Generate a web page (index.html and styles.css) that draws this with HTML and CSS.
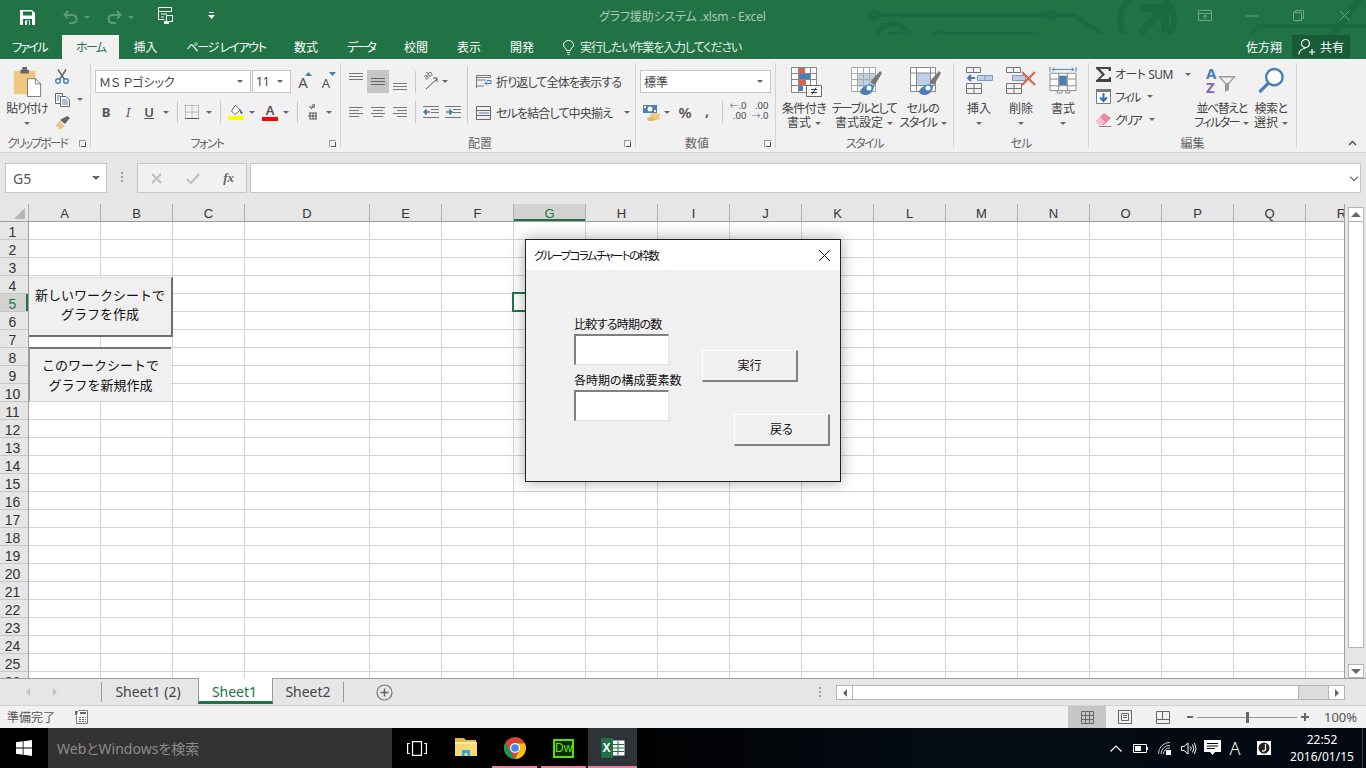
FILE: index.html
```html
<!DOCTYPE html>
<html lang="ja">
<head>
<meta charset="utf-8">
<title>グラフ援助システム .xlsm - Excel</title>
<link rel="stylesheet" href="styles.css">
</head>
<body>
<div class="app">

<header class="titlebar">
  <svg class="pattern" viewBox="0 0 506 53" width="506" height="53">
    <g fill="none" stroke="#1c6a41" stroke-width="4">
      <path d="M14 15H214L270 53"/><circle cx="14" cy="15" r="3.5"/><circle cx="191" cy="15" r="3.5"/>
      <path d="M79 34H177L205 53"/><circle cx="79" cy="34" r="3.5"/>
      <path d="M117 53L130 45H230L243 53"/><circle cx="220" cy="45" r="3.5"/>
      <circle cx="287" cy="20" r="27" stroke-width="6"/>
      <circle cx="33" cy="41" r="17" stroke-width="5"/>
      <path d="M376 53L398 26H506M455 53L498 0M470 40L506 -6"/>
    </g>
    <path fill="#1c6a41" d="M278 30L295 12H281V4H309V32H301V18L284 35z"/>
    <path fill="#1c6a41" d="M45 52L33 40V48H27V32H43V38H36L49 49z"/>
  </svg>
  <div class="qat">
    <span class="qat-save"><svg viewBox="0 0 15 15" width="15" height="15"><path fill="#fff" fill-rule="evenodd" d="M0 0H12L15 3V15H0ZM3 1.5V5.5H12V1.5ZM3 9V15H5V10.5H10V15H12V9ZM7 11H9V15H7Z"/></svg></span>
    <span class="qat-undo"><svg viewBox="0 0 15 14" width="15" height="14"><path fill="none" stroke="#5f9a7d" stroke-width="2" d="M5 1L1.5 5L5 8.500M2 5H9Q13.500 5 13.500 9T9 13H6"/></svg></span>
    <i class="dd dim qat-dd1"></i>
    <span class="qat-redo"><svg viewBox="0 0 15 14" width="15" height="14"><path fill="none" stroke="#5f9a7d" stroke-width="2" d="M10 1L13.500 5L10 8.500M13 5H6Q1.500 5 1.500 9T6 13H9"/></svg></span>
    <i class="dd dim qat-dd2"></i>
    <span class="qat-form"><svg viewBox="0 0 17 17" width="17" height="17"><path fill="none" stroke="#fff" d="M.5 .5H13.500V4.500H.5ZM.5 4.500V12.500H6.500M3 7H9M3 10H6"/><path fill="#fff" d="M8 8H15V15H8ZM6 14H11V17H6Z"/><path fill="#217346" d="M9 9H14V14H9Z"/></svg></span>
    <span class="qat-more"><svg viewBox="0 0 7 7" width="7" height="7"><path fill="#fff" d="M1 0H6V1H1ZM0 3H7L3.500 7Z"/></svg></span>
  </div>
  <div class="doc-title">グラフ援助システム .xlsm - Excel</div>
  <div class="winbtns">
    <svg class="win-a" viewBox="0 0 14 11" width="14" height="11"><path fill="none" stroke="#6fa58a" d="M.5 .5H13.500V10.500H.5ZM.5 3.500H13.500M7 9V5M5 7L7 5L9 7"/></svg>
    <svg class="win-b" viewBox="0 0 12 2" width="12" height="2"><path stroke="#6fa58a" d="M0 1H12"/></svg>
    <svg class="win-c" viewBox="0 0 11 11" width="11" height="11"><path fill="none" stroke="#6fa58a" d="M.5 2.500H8.500V10.500H.5ZM2.500 2.500V.5H10.500V8.500H8.500"/></svg>
    <svg class="win-d" viewBox="0 0 11 11" width="11" height="11"><path fill="none" stroke="#6fa58a" d="M.5 .5L10.500 10.500M10.500 .5L.5 10.500"/></svg>
  </div>
</header>

<nav class="tabs">
  <span class="tab t62 k17">ファイル</span>
  <span class="tab active t57 k17">ホーム</span>
  <span class="tab t53">挿入</span>
  <span class="tab t108 k13">ページ レイアウト</span>
  <span class="tab t52">数式</span>
  <span class="tab t58 k20">データ</span>
  <span class="tab t52">校閲</span>
  <span class="tab t54">表示</span>
  <span class="tab t52">開発</span>
  <span class="tell">
    <svg viewBox="0 0 11 15" width="11" height="15"><path fill="none" stroke="#fff" d="M3.500 10.500C3.500 8 .5 7.500 .5 5A5 4.500 0 0 1 10.500 5C10.500 7.500 7.500 8 7.500 10.500ZM4 12.500H7M4.500 14.500H6.500"/></svg>
    <span class="k11">実行したい作業を入力してください</span>
  </span>
  <span class="user">佐方翔</span>
  <span class="share">
    <svg viewBox="0 0 18 16" width="18" height="16"><path fill="none" stroke="#fff" stroke-width="1.200" d="M3.500 4.500A4 4 0 1 1 11.500 4.500A4 4 0 1 1 3.500 4.500ZM.8 15.500C1.500 11 4 9.500 7.500 9.500M11 13H17M14 10V16"/></svg>
    共有
  </span>
</nav>

<section class="ribbon">

  <div class="group g-clip">
    <div class="gbody">
      <div class="big w42">
        <svg viewBox="0 0 30 32" width="30" height="31"><path fill="#eec97f" d="M1 4H24V29H1Z"/><path fill="#666" d="M8 3H10V0H15V3H17V7H8Z"/><path fill="#fff" stroke="#777" d="M15.500 12.500H24L29.500 18V31.500H15.500Z"/><path fill="none" stroke="#777" d="M24 12.500V18H29.500"/></svg>
        <div class="lbl k10">貼り付け</div>
        <div class="lbl"><i class="dd"></i></div>
      </div>
      <div class="smallcol">
        <div class="clip-row">
          <svg viewBox="0 0 14 15" width="14" height="15"><path fill="none" stroke="#666" stroke-width="1.500" d="M3 .5L9.500 10.500M11 .5L4.500 10.500"/><circle cx="3" cy="12" r="2.300" fill="none" stroke="#4a7fb5" stroke-width="1.400"/><circle cx="11" cy="12" r="2.300" fill="none" stroke="#4a7fb5" stroke-width="1.400"/></svg>
        </div>
        <div class="clip-row">
          <svg viewBox="0 0 15 14" width="15" height="14"><path fill="#fff" stroke="#666" d="M.5 .5H7.500V10.500H.5Z"/><path fill="#fff" stroke="#666" d="M5.500 3.500H11L14.500 7V13.500H5.500Z"/><path stroke="#4a7fb5" d="M2 3H5M2 5H4M2 7H4M7 7H12M7 9H13M7 11H13"/></svg>
          <i class="dd copy-dd"></i>
        </div>
        <div class="clip-row">
          <svg viewBox="0 0 16 14" width="16" height="14"><path fill="#e8c78e" d="M0 11L4 5L10 10L5 14L3 11Z"/><path fill="#666" d="M5 4L12 0L15 2L10 8Z"/></svg>
        </div>
      </div>
    </div>
    <div class="glabel k20">クリップボード</div>
    <i class="launch"></i>
  </div>

  <div class="group g-font">
    <div class="gbody rows">
      <div class="row1">
        <div class="combo w156"><span class="ms">ＭＳ Ｐゴシック</span><i class="dd"></i></div>
        <div class="combo w39"><span>11</span><i class="dd"></i></div>
        <span class="cell w24 glyph a-grow">A<svg viewBox="0 0 7 4" width="7" height="4"><path fill="#4a7fb5" d="M0 4L3.500 0L7 4Z"/></svg></span>
        <span class="cell w24 glyph a-shrink">A<svg viewBox="0 0 7 4" width="7" height="4"><path fill="#4a7fb5" d="M0 0H7L3.500 4Z"/></svg></span>
      </div>
      <div class="row2">
        <span class="cell w22 b">B</span>
        <span class="cell w22 it">I</span>
        <span class="cell w20 u">U</span>
        <span class="cell w14"><i class="dd"></i></span>
        <span class="cell w8"><i class="vsep"></i></span>
        <span class="cell w22"><svg viewBox="0 0 14 14" width="14" height="14"><path fill="none" stroke="#888" stroke-dasharray="1 1" d="M.5 .5H13.500V13M.5 .5V13.500M7 .5V13.500M.5 7H13.500"/><path stroke="#555" d="M0 13.500H14"/></svg></span>
        <span class="cell w12"><i class="dd"></i></span>
        <span class="cell w10"><i class="vsep"></i></span>
        <span class="cell w22 stack"><svg viewBox="0 0 16 12" width="16" height="12"><path fill="#fff" stroke="#666" d="M3.500 7L7.500 1L12 6L7 10.500Z"/><path fill="#4a7fb5" d="M12 5L15 8.500L13.500 10.500L12 8.500Z"/></svg><b class="swatch yellow"></b></span>
        <span class="cell w10"><i class="dd"></i></span>
        <span class="cell w26 stack"><span class="a-color">A</span><b class="swatch red"></b></span>
        <span class="cell w6"><i class="dd"></i></span>
        <span class="cell w16"><i class="vsep"></i></span>
        <span class="cell w14"><svg viewBox="0 0 11 16" width="11" height="16"><path fill="none" stroke="#555" d="M2 3H8M5 1L8 1L4 5M2 9H10M1 12H10M2.500 15H10M3 9V15M6 9V15M9 9V15"/></svg></span>
        <span class="cell w20"><i class="dd"></i></span>
      </div>
    </div>
    <div class="glabel k15">フォント</div>
    <i class="launch"></i>
  </div>

  <div class="group g-align">
    <div class="gbody split">
      <div class="align-left">
        <div class="row1">
          <span class="cell w14"><svg viewBox="0 0 14 10" width="14" height="10" class="up6"><path stroke="#777" d="M0 .5H14M0 3.500H14M0 6.500H14"/></svg></span>
          <span class="cell w22 sel"><svg viewBox="0 0 14 8" width="14" height="8"><path stroke="#666" d="M0 .5H14M0 3.500H14M0 6.500H14"/></svg></span>
          <span class="cell w14 ml4"><svg viewBox="0 0 14 8" width="14" height="8" class="dn5"><path stroke="#777" d="M0 .5H14M0 3.500H14M0 6.500H14"/></svg></span>
          <span class="cell w16"><i class="vsep"></i></span>
          <span class="cell w14"><span class="ori">ab</span><svg class="ori-arrow" viewBox="0 0 15 14" width="15" height="14"><path fill="none" stroke="#555" d="M3 13L14 3M10 2H14V6"/></svg></span>
          <span class="cell w16"><i class="dd"></i></span>
        </div>
        <div class="row2">
          <span class="cell w14"><svg viewBox="0 0 14 10" width="14" height="10"><path stroke="#777" d="M0 .5H14M0 3.500H10M0 6.500H14M0 9.500H10"/></svg></span>
          <span class="cell w14 ml8"><svg viewBox="0 0 14 10" width="14" height="10"><path stroke="#777" d="M0 .5H14M2 3.500H12M0 6.500H14M2 9.500H12"/></svg></span>
          <span class="cell w14 ml8"><svg viewBox="0 0 14 10" width="14" height="10"><path stroke="#777" d="M0 .5H14M4 3.500H14M0 6.500H14M4 9.500H14"/></svg></span>
          <span class="cell w16"><i class="vsep"></i></span>
          <span class="cell w16"><svg viewBox="0 0 16 12" width="16" height="12"><path stroke="#777" d="M0 .5H16M8 3.500H16M8 6.500H16M0 11.500H16"/><path stroke="#4a7fb5" stroke-width="1.500" d="M1 6H7M3.500 3.500L1 6L3.500 8.500"/></svg></span>
          <span class="cell w6"></span>
          <span class="cell w16"><svg viewBox="0 0 16 12" width="16" height="12"><path stroke="#777" d="M0 .5H16M8 3.500H16M8 6.500H16M0 11.500H16"/><path stroke="#4a7fb5" stroke-width="1.500" d="M1 6H7M4.500 3.500L7 6L4.500 8.500"/></svg></span>
        </div>
      </div>
      <i class="vsep tall"></i>
      <div class="align-right">
        <div class="txtrow top">
          <svg viewBox="0 0 16 14" width="16" height="14"><path fill="none" stroke="#777" d="M.5 .5H14.500V2.500H.5Z"/><path stroke="#777" d="M.5 5H10M.5 11H8M.5 2V13"/><path fill="none" stroke="#4a7fb5" d="M11 5.500H15V8.500H9M11 6.500L9 8.500L11 10.500"/></svg>
          <span class="tx k8">折り返して全体を表示する</span>
        </div>
        <div class="txtrow">
          <svg viewBox="0 0 16 14" width="16" height="14"><path fill="none" stroke="#666" d="M.5 .5H14.500V13.500H.5ZM.5 4.500H14.500M.5 9.500H14.500"/><path stroke="#4a7fb5" d="M3 7H13"/></svg>
          <span class="tx k8">セルを結合して中央揃え</span>
          <i class="dd merge-dd"></i>
        </div>
      </div>
    </div>
    <div class="glabel">配置</div>
    <i class="launch"></i>
  </div>

  <div class="group g-num">
    <div class="gbody rows">
      <div class="row1"><div class="combo w131"><span>標準</span><i class="dd"></i></div></div>
      <div class="row2">
        <span class="cell w24"><svg viewBox="0 0 18 17" width="18" height="17"><path fill="#4a7fb5" d="M0 1H14V9H0Z"/><circle cx="7" cy="5" r="2.500" fill="#fff"/><path fill="#fff" d="M1 2H3V4H1ZM11 6H13V8H11Z"/><ellipse cx="12" cy="11" rx="5" ry="2" fill="#eec97f"/><ellipse cx="12" cy="14" rx="5" ry="2" fill="#eec97f"/><ellipse cx="8" cy="15" rx="4" ry="2" fill="#e2b765"/></svg></span>
        <span class="cell w6"><i class="dd"></i></span>
        <span class="cell w30 pct">%</span>
        <span class="cell w14 cma">,</span>
        <span class="cell w16"><i class="vsep"></i></span>
        <span class="cell w16"><span class="decs"><span><b class="arr">←</b>.0</span><span>.00</span></span></span>
        <span class="cell w6"></span>
        <span class="cell w16"><span class="decs"><span>.00</span><span><b class="arr">→</b>.0</span></span></span>
      </div>
    </div>
    <div class="glabel">数値</div>
    <i class="launch"></i>
  </div>

  <div class="group g-style">
    <div class="gbody">
      <div class="big w46">
        <svg viewBox="0 0 31 30" width="31" height="30"><path fill="#fff" d="M.5 .5H25.500V25.500H.5Z"/><path fill="#dd6342" d="M8 1H14V6H8ZM8 13H15V18H8Z"/><path fill="#4a7fb5" d="M8 7H19V12H8ZM8 19H12V24H8Z"/><path fill="none" stroke="#888" d="M.5 .5H25.500V25.500H.5ZM.5 6.500H25.500M.5 12.500H25.500M.5 18.500H25.500M7.500 .5V25.500M19.500 .5V25.500"/><path fill="#fff" stroke="#666" d="M15.500 18.500H30.500V29.500H15.500Z"/><path stroke="#333" d="M20 22.500H26M20 25.500H26M25 20.500L21 27.500"/></svg>
        <div class="lbl k5">条件付き</div>
        <div class="lbl">書式<i class="dd tdd"></i></div>
      </div>
      <div class="big w74">
        <svg viewBox="0 0 31 30" width="31" height="30"><path fill="#fff" d="M0 0H25V25H0Z"/><path fill="#bcd0e6" d="M6 6H25V20H6Z"/><path fill="none" stroke="#aaa" d="M.5 .5H24.500V24.500H.5ZM.5 6.500H24.500M.5 12.500H24.500M.5 18.500H24.500M6.500 .5V24.500M12.500 .5V24.500M18.500 .5V24.500"/><path fill="#777" d="M20 14L29 4L31 6L24 18L20 16Z"/><path fill="#4a7fb5" d="M9 24C10 21 15 18 19 17L23 19C23 24 19 28 15 28C12 28 9 27 9 24Z"/><circle cx="18" cy="21" r="2.500" fill="#fff"/></svg>
        <div class="lbl k15">テーブルとして</div>
        <div class="lbl">書式設定<i class="dd tdd"></i></div>
      </div>
      <div class="big w44">
        <svg viewBox="0 0 31 30" width="31" height="30"><path fill="#fff" d="M0 0H26V25H0Z"/><path fill="#bcd0e6" d="M6 6H21V18H6Z"/><path fill="none" stroke="#888" d="M.5 .5H25.500V24.500H.5ZM.5 6H25.500M.5 18.500H25.500M6.500 .5V24.500M20.500 .5V24.500"/><path fill="#777" d="M20 14L29 4L31 6L24 18L20 16Z"/><path fill="#4a7fb5" d="M9 24C10 21 15 18 19 17L23 19C23 24 19 28 15 28C12 28 9 27 9 24Z"/><circle cx="18" cy="21" r="2.500" fill="#fff"/></svg>
        <div class="lbl k5">セルの</div>
        <div class="lbl"><span class="k15">スタイル</span><i class="dd tdd"></i></div>
      </div>
    </div>
    <div class="glabel k15">スタイル</div>
  </div>

  <div class="group g-cells">
    <div class="gbody">
      <div class="big w42">
        <svg viewBox="0 0 27 27" width="27" height="27"><path fill="none" stroke="#777" d="M.5 .5H14.500V5.500H.5ZM7.500 .5V5.500M.5 16.500H15.500V26.500H.5ZM8 16.500V26.500M.5 21.500H15.500"/><path fill="#bcd0e6" stroke="#7a9cc0" d="M11.500 8.500H26.500V13.500H11.500ZM19 8.500V13.500"/><path stroke="#4a7fb5" stroke-width="2" fill="none" d="M9 11H2M5 8L2 11L5 14"/></svg>
        <div class="lbl">挿入</div>
        <div class="lbl"><i class="dd"></i></div>
      </div>
      <div class="big w42">
        <svg viewBox="0 0 30 27" width="30" height="27"><path fill="none" stroke="#777" d="M.5 .5H14.500V5.500H.5ZM7.500 .5V5.500M.5 16.500H15.500V26.500H.5ZM8 16.500V26.500M.5 21.500H15.500"/><path fill="#bcd0e6" stroke="#7a9cc0" d="M6.500 8.500H19.500V13.500H6.500Z"/><path stroke="#dd6342" stroke-width="2" d="M16 5L29 18M29 5L16 18"/></svg>
        <div class="lbl">削除</div>
        <div class="lbl"><i class="dd"></i></div>
      </div>
      <div class="big w42">
        <svg viewBox="0 0 28 28" width="28" height="28"><path fill="none" stroke="#4a7fb5" d="M.5 0V5M27.500 0V5M3 2.500H25M5 .5L3 2.500L5 4.500M23 .5L25 2.500L23 4.500"/><path fill="#fff" d="M1 6H27V24H1Z"/><path fill="#4a7fb5" d="M10 9H18V19H10Z"/><path fill="none" stroke="#888" d="M.5 6.500H27.500V24.500H.5ZM.5 19.500H27.500M9.500 6.500V24.500M18.500 6.500V24.500M.5 12.500H9M19 12.500H27"/><path fill="none" stroke="#888" d="M8 25V27H13V25M17 25V27H21V25"/></svg>
        <div class="lbl">書式</div>
        <div class="lbl"><i class="dd"></i></div>
      </div>
    </div>
    <div class="glabel k10">セル</div>
  </div>

  <div class="group g-edit">
    <div class="gbody">
      <div class="editcol">
        <div class="edit-row sum"><svg viewBox="0 0 15 15" width="15" height="15"><path fill="#444" d="M0 0H15V4H13L12 2H4L9 7.500L4 12H12.500L13.500 10H15V15H0V13.500L6 7.500L0 1.500Z"/></svg><span class="tx k5">オート SUM</span><i class="dd sum-dd"></i></div>
        <div class="edit-row"><svg viewBox="0 0 15 15" width="15" height="15"><path fill="#fff" stroke="#777" d="M.5 .5H14.500V14.500H.5Z"/><path fill="#777" d="M0 0H15V3H0Z"/><path fill="none" stroke="#2f70b5" stroke-width="2" d="M7.500 4V12M4 8.500L7.500 12L11 8.500"/></svg><span class="tx k20">フィル</span><i class="dd tdd"></i></div>
        <div class="edit-row"><svg viewBox="0 0 15 14" width="15" height="14"><path fill="#ea8a9b" d="M0 8L8 0L15 5L8 12H3Z"/><path fill="#f4c1ca" d="M0 8L4 4L9 9L6 12H3Z"/><path stroke="#888" d="M3 13.500H15"/></svg><span class="tx k20">クリア</span><i class="dd tdd"></i></div>
      </div>
      <div class="big w55">
        <div class="sorticon">
          <div class="azcol"><span class="a1">A</span><span class="z1">Z</span></div>
          <svg class="funnel" viewBox="0 0 19 17" width="19" height="17"><path fill="#999" d="M0 0H18L11 8V14L7 16V8Z"/><path fill="#f1f1f1" d="M3 1.500H15L10 7H8Z"/></svg>
        </div>
        <div class="lbl k15">並べ替えと</div>
        <div class="lbl"><span class="k15">フィルター</span><i class="dd tdd"></i></div>
      </div>
      <div class="big w44">
        <svg viewBox="0 0 28 28" width="28" height="28"><circle cx="17.500" cy="10.500" r="8.500" fill="#fff" stroke="#4a7fb5" stroke-width="2.500"/><path stroke="#4a7fb5" stroke-width="3.500" d="M11 17L2 26"/></svg>
        <div class="lbl k5">検索と</div>
        <div class="lbl">選択<i class="dd tdd"></i></div>
      </div>
    </div>
    <div class="glabel">編集</div>
  </div>

  <svg class="collapse" viewBox="0 0 9 6" width="9" height="6"><path fill="none" stroke="#555" stroke-width="1.500" d="M1 5L4.500 1.500L8 5"/></svg>
</section>

<section class="fbar">
  <div class="namebox"><span>G5</span><i class="dd big-dd"></i></div>
  <span class="fdots"></span>
  <div class="fbtns">
    <svg viewBox="0 0 11 11" width="11" height="11"><path stroke="#bdbdbd" stroke-width="1.800" d="M1 1L10 10M10 1L1 10"/></svg>
    <svg viewBox="0 0 14 11" width="14" height="11"><path fill="none" stroke="#bdbdbd" stroke-width="2" d="M1 6L5 10L13 1"/></svg>
    <span class="fx">fx</span>
  </div>
  <div class="finput"><i class="chev"></i></div>
</section>

<section class="sheetarea">
  <div class="sheet">
    <div class="colhead">
      <div class="corner"><i class="corner-tri"></i></div>
      <span class="ch w72">A</span><span class="ch w72">B</span><span class="ch w72">C</span><span class="ch w125">D</span><span class="ch w72">E</span><span class="ch w72">F</span><span class="ch w72 cur">G</span><span class="ch w72">H</span><span class="ch w72">I</span><span class="ch w72">J</span><span class="ch w72">K</span><span class="ch w72">L</span><span class="ch w72">M</span><span class="ch w72">N</span><span class="ch w72">O</span><span class="ch w72">P</span><span class="ch w72">Q</span><span class="ch w72">R</span>
    </div>
    <div class="sheetbody">
      <div class="rowhead">
        <span class="rh">1</span><span class="rh">2</span><span class="rh">3</span><span class="rh">4</span><span class="rh cur">5</span><span class="rh">6</span><span class="rh">7</span><span class="rh">8</span><span class="rh">9</span><span class="rh">10</span><span class="rh">11</span><span class="rh">12</span><span class="rh">13</span><span class="rh">14</span><span class="rh">15</span><span class="rh">16</span><span class="rh">17</span><span class="rh">18</span><span class="rh">19</span><span class="rh">20</span><span class="rh">21</span><span class="rh">22</span><span class="rh">23</span><span class="rh">24</span><span class="rh">25</span><span class="rh">26</span>
      </div>
      <div class="cols">
        <div class="col w72"></div><div class="col w72"></div><div class="col w72"></div><div class="col w125"></div><div class="col w72"></div><div class="col w72"></div><div class="col w72"></div><div class="col w72"></div><div class="col w72"></div><div class="col w72"></div><div class="col w72"></div><div class="col w72"></div><div class="col w72"></div><div class="col w72"></div><div class="col w72"></div><div class="col w72"></div><div class="col w72"></div><div class="col w72"></div>
        <div class="selcell"></div>
        <div class="sbtn raised">新しいワークシートで<br>グラフを作成</div>
        <div class="sbtn pressed">このワークシートで<br>グラフを新規作成</div>
      </div>
    </div>
  </div>
  <div class="vscroll">
    <span class="sbtn-up"><i class="tri-up"></i></span>
    <span class="vthumb"></span>
    <span class="sbtn-dn"><i class="tri-dn"></i></span>
  </div>
</section>

<section class="tabbar">
  <div class="tabnav"><i class="nav-l"></i><i class="nav-r"></i></div>
  <span class="stab s96">Sheet1 (2)</span>
  <span class="stab on s74">Sheet1</span>
  <span class="stab s71">Sheet2</span>
  <svg class="addsheet" viewBox="0 0 17 17" width="17" height="17"><circle cx="8.500" cy="8.500" r="7.500" fill="none" stroke="#777" stroke-width="1.200"/><path stroke="#666" stroke-width="1.500" d="M8.500 4.500V12.500M4.500 8.500H12.500"/></svg>
  <span class="hdots"></span>
  <div class="hscroll">
    <span class="hbtn"><i class="nav-l dark"></i></span>
    <span class="hthumb"></span>
    <span class="htrack"></span>
    <span class="hbtn"><i class="nav-r dark"></i></span>
  </div>
</section>

<section class="statusbar">
  <span class="ready">準備完了</span>
  <svg class="macro" viewBox="0 0 13 14" width="13" height="14"><path fill="#666" d="M0 1H4V5H0Z"/><path fill="#fff" stroke="#777" d="M3.500 .5H12.500V13.500H1.500V5.500"/><path fill="#666" d="M5 2H11V4H5ZM4 7H6V8H4ZM7 7H9V8H7ZM10 7H11V8H10ZM4 9H6V10H4ZM7 9H9V10H7ZM10 9H11V10H10ZM4 11H6V12H4ZM7 11H9V12H7ZM10 11H11V12H10Z"/></svg>
  <div class="views">
    <span class="view on"><svg viewBox="0 0 13 13" width="13" height="13"><path fill="none" stroke="#666" d="M.5 .5H12.500V12.500H.5ZM4.500 .5V12.500M8.500 .5V12.500M.5 4.500H12.500M.5 8.500H12.500"/></svg></span>
    <span class="view"><svg viewBox="0 0 14 14" width="14" height="14"><path fill="none" stroke="#666" d="M.5 .5H13.500V13.500H.5ZM3.500 3.500H10.500V10.500H3.500ZM5 5.500H9M5 7.500H9"/></svg></span>
    <span class="view"><svg viewBox="0 0 14 13" width="14" height="13"><path fill="none" stroke="#666" d="M.5 .5H13.500V12.500H.5ZM.5 8.500H13.500M6.500 .5V8.500"/></svg></span>
  </div>
  <div class="zoom">
    <i class="zm-minus"></i>
    <span class="zm-track"><i class="zm-knob"></i></span>
    <i class="zm-plus"></i>
    <span class="zm-pct">100%</span>
  </div>
</section>

<footer class="taskbar">
  <span class="start"><svg viewBox="0 0 16 16" width="16" height="16"><path fill="#fff" d="M0 2.300L6.700 1.300V7.600H0ZM7.500 1.200L16 0V7.600H7.500ZM0 8.400H6.700V14.700L0 13.700ZM7.500 8.400H16V16L7.500 14.800Z"/></svg></span>
  <span class="search">WebとWindowsを検索</span>
  <span class="tb"><svg viewBox="0 0 20 15" width="20" height="15"><path fill="none" stroke="#fff" stroke-width="1.200" d="M5.500 .6H14.500V14.400H5.500ZM2.800 2.500H.6V12.500H2.800M17.200 2.500H19.400V12.500H17.200"/></svg></span>
  <span class="tb"><svg viewBox="0 0 22 22" width="22" height="22"><path fill="#e6b84f" d="M0 1H9L11 3H21V6H0Z"/><path fill="#f8d775" d="M0 5H22V19H0Z"/><path fill="#fff3c4" d="M0 5H22V6.500H0Z"/><path fill="#2aa5e0" d="M7 13H15V19H12.500V16H9.500V19H7Z"/></svg></span>
  <span class="tb run"><svg viewBox="0 0 22 22" width="22" height="22"><circle cx="11" cy="11" r="11" fill="#db4437"/><path fill="#0f9d58" d="M1.500 5.500L6 14L11 22A11 11 0 0 1 1.500 5.500Z"/><path fill="#f4c20d" d="M11 6.500H21A11 11 0 0 1 11 22L15.500 13.500Z"/><circle cx="11" cy="11" r="5" fill="#fff"/><circle cx="11" cy="11" r="3.800" fill="#4285f4"/></svg></span>
  <span class="tb run"><span class="dw">Dw</span></span>
  <span class="tb run cur"><span class="xlicon"><span class="xl">X</span><svg viewBox="0 0 12 16" width="12" height="16"><path fill="#fff" d="M0 .5H11.500V15.500H0Z"/><path fill="none" stroke="#1e6b40" d="M0 4.500H11M0 8H11M0 11.500H11M5 1V15"/></svg></span></span>
  <div class="tray">
    <span class="ti w24"><svg viewBox="0 0 12 7" width="12" height="7"><path fill="none" stroke="#fff" stroke-width="1.200" d="M.5 6.500L6 1L11.500 6.500"/></svg></span>
    <span class="ti w24"><svg viewBox="0 0 15 9" width="15" height="9"><path fill="none" stroke="#fff" d="M.5 .5H13.500V8.500H.5Z"/><path fill="#fff" d="M2 2H8V7H2ZM14 3H15V6H14Z"/></svg></span>
    <span class="ti w25"><svg viewBox="0 0 13 13" width="13" height="13"><path fill="none" stroke="#ccc" d="M.5 12A11 11 0 0 1 12 .5M3 12A8.500 8.500 0 0 1 12 3.500M5.500 12A6 6 0 0 1 12 6"/><path fill="#fff" d="M8 8H13V13H8Z"/></svg></span>
    <span class="ti w23"><svg viewBox="0 0 16 13" width="16" height="13"><path fill="none" stroke="#fff" d="M.5 4.500H3L7 1V12L3 8.500H.5ZM9.500 4.500Q11 6.500 9.500 8.500M11.500 2.500Q14 6.500 11.500 10.500M13.500 1Q16.500 6.500 13.500 12"/></svg></span>
    <span class="ti w24"><svg viewBox="0 0 17 16" width="17" height="16"><path fill="#fff" d="M0 0H17V12H11L8.500 15L6 12H0Z"/><path stroke="#000" d="M3 3.500H14M3 6H14M3 8.500H11"/></svg></span>
    <span class="ti w22 ime">A</span>
    <span class="ti w36"><svg viewBox="0 0 14 14" width="14" height="14"><path fill="#fff" d="M0 0H14V14H0Z"/><circle cx="7" cy="7" r="5.500" fill="#222"/><path fill="none" stroke="#fff" stroke-width="1.300" d="M8.500 3V8.500Q8 10.500 5 10"/></svg></span>
    <span class="clock"><span>22:52</span><span>2016/01/15</span></span>
    <span class="showdesk"></span>
  </div>
</footer>

<div class="dialog">
  <div class="dlg-title"><span>グループコラムチャートの枠数</span>
    <svg viewBox="0 0 11 11" width="11" height="11"><path stroke="#111" d="M0 0L11 11M11 0L0 11"/></svg>
  </div>
  <div class="dlg-body">
    <div class="dlg-left">
      <div class="dlg-lbl first">比較する時期の数</div>
      <div class="dlg-input"></div>
      <div class="dlg-lbl second">各時期の構成要素数</div>
      <div class="dlg-input"></div>
    </div>
    <div class="dlg-right">
      <div class="dlg-btn">実行</div>
      <div class="dlg-btn back">戻る</div>
    </div>
  </div>
</div>

</div>
</body>
</html>
```
FILE: styles.css
```css
* { box-sizing: border-box; }
html, body { margin: 0; padding: 0; }
body {
  width: 1366px; height: 768px; overflow: hidden; background: #fff;
  font-family: "Noto Sans", "Noto Sans CJK JP", sans-serif;
  font-feature-settings: "palt";
  font-size: 12px; color: #444;
}
i, b { font-style: normal; font-weight: normal; }
svg { display: block; flex: none; }
.app { position: relative; width: 1366px; height: 768px; display: flex; flex-direction: column; overflow: hidden; }

/* shared bits */
.dd { display: inline-block; width: 0; height: 0; border-left: 3px solid transparent; border-right: 3px solid transparent; border-top: 3px solid #666; vertical-align: middle; }
.dd.dim { border-top-color: #5f9a7d; }
.tdd { margin-left: 4px; }
.vsep { display: block; width: 1px; height: 22px; background: #c6c6c6; }
.w6{width:6px}.w8{width:8px}.w10{width:10px}.w12{width:12px}.w14{width:14px}.w16{width:16px}.w20{width:20px}.w22{width:22px}.w23{width:23px}.w24{width:24px}.w25{width:25px}.w26{width:26px}.w30{width:30px}.w36{width:36px}.w39{width:39px}.w42{width:42px}.w44{width:44px}.w46{width:46px}.w55{width:55px}.w72{width:72px}.w74{width:74px}.w125{width:125px}.w131{width:131px}.w156{width:156px}
.k5{letter-spacing:-.5px}.k8{letter-spacing:-.85px}.k10{letter-spacing:-1px}.k11{letter-spacing:-1.1px}.k13{letter-spacing:-1.3px}.k15{letter-spacing:-1.5px}.k17{letter-spacing:-1.7px}.k20{letter-spacing:-2px}

/* title bar */
.titlebar { position: relative; height: 35px; background: #217346; display: flex; flex: none; }
.pattern { position: absolute; left: 860px; top: 0; }
.qat { position: relative; display: flex; align-items: center; height: 34px; padding-left: 20px; }
.qat-undo { margin-left: 28px; opacity: .95; }
.qat-dd1 { margin-left: 6px; }
.qat-redo { margin-left: 17px; }
.qat-dd2 { margin-left: 6px; }
.qat-form { margin-left: 24px; margin-top: -3px; }
.qat-more { margin-left: 33px; margin-top: -4px; }
.doc-title { position: absolute; left: 599px; top: 8px; color: #a8cbb8; font-size: 12px; line-height: 18px; white-space: nowrap; letter-spacing: -.15px; }
.winbtns { position: absolute; left: 1198px; top: 10px; display: flex; align-items: center; }
.win-b { margin-left: 34px; }
.win-c { margin-left: 35px; }
.win-d { margin-left: 35px; }

/* tabs */
.tabs { height: 24px; background: #217346; display: flex; flex: none; align-items: stretch; color: #fff; position: relative; }
.tab { display: flex; align-items: center; justify-content: center; font-size: 12px; white-space: nowrap; padding-bottom: 1px; }
.tab.active { background: #f1f1f1; color: #217346; }
.t62{width:62px;padding-right:3px}.t57{width:57px}.t53{width:53px}.t108{width:108px}.t52{width:52px}.t58{width:58px}.t54{width:54px}
.tell { margin-left: 15px; display: flex; align-items: center; gap: 6px; color: #e8f0ec; white-space: nowrap; }
.user { margin-left: auto; display: flex; align-items: center; white-space: nowrap; }
.share { margin: 0 16px 1px 10px; width: 58px; background: #185c37; display: flex; align-items: center; justify-content: center; gap: 4px; }

/* ribbon */
.ribbon { height: 94px; flex: none; background: #f1f1f1; border-bottom: 1px solid #d2d2d2; display: flex; }
.group { position: relative; height: 85px; margin-top: 4px; border-right: 1px solid #d4d4d4; display: flex; flex-direction: column; flex: none; }
.gbody { height: 73px; display: flex; }
.gbody.rows { flex-direction: column; padding-top: 7px; }
.glabel { height: 12px; line-height: 15px; text-align: center; color: #666; font-size: 12px; white-space: nowrap; }
.launch { position: absolute; right: 4px; bottom: 1px; width: 7px; height: 7px; border-left: 1px solid #999; border-top: 1px solid #999; }
.launch::after { content: ""; position: absolute; right: 0; bottom: 0; width: 4px; height: 4px; border-right: 1px solid #555; border-bottom: 1px solid #555; }
.g-clip { width: 91px; }
.g-clip .gbody { padding-left: 6px; }
.g-clip .glabel { width: 74px; }
.g-font { width: 250px; }
.g-font .gbody { padding-left: 4px; }
.g-font .glabel { padding-right: 17px; }
.g-align { width: 295px; }
.g-align .gbody { padding-left: 8px; padding-top: 7px; }
.g-align .glabel { padding-right: 16px; }
.g-num { width: 140px; }
.g-num .gbody { padding-left: 4px; }
.g-num .glabel { padding-right: 17px; }
.g-style { width: 178px; }
.g-style .gbody { padding-left: 5px; }
.g-style .big svg { margin-left: 4px; }
.g-cells { width: 135px; }
.g-cells .gbody { padding-left: 4px; }
.g-edit { width: 208px; }
.g-edit .gbody { padding-left: 7px; }
.collapse { margin: 81px 0 0 51px; }

.big { display: flex; flex-direction: column; align-items: center; padding-top: 4px; flex: none; }
.big svg { height: 30px; }
.big .lbl { line-height: 14px; white-space: nowrap; height: 14px; text-align: center; }
.big svg + .lbl { margin-top: 5px; }
.g-cells .big svg, .g-edit .big > svg { height: 27px; margin-bottom: 3px; }
.sorticon { width: 31px; height: 27px; margin-bottom: 8px; display: flex; }
.azcol { display: flex; flex-direction: column; width: 12px; font-size: 15px; font-weight: 700; line-height: 13.500px; flex: none; }
.big svg.funnel { height: 17px; margin-top: 9px; }
.a1 { color: #4a7fb5; }
.z1 { color: #8b63b8; }
.ori { position: absolute; left: 0; top: 0; font-size: 8px; line-height: 10px; color: #555; transform: rotate(-40deg); }
.ori-arrow { margin-top: 2px; }
.smallcol { margin-left: 7px; display: flex; flex-direction: column; padding-top: 2px; }
.clip-row { height: 23px; display: flex; align-items: center; position: relative; }
.copy-dd { margin-left: 7px; }

.row1 { height: 23px; display: flex; align-items: center; }
.row2 { height: 20px; margin-top: 9px; display: flex; align-items: center; }
.cell { display: flex; align-items: center; justify-content: center; height: 100%; flex: none; position: relative; }
.combo { height: 23px; background: #fff; border: 1px solid #c6c6c6; display: flex; align-items: center; justify-content: space-between; padding: 0 7px 0 3px; flex: none; margin-right: 1px; color: #444; }
.combo.w39 { padding-left: 3px; margin-right: 0; }
.combo.w131 { padding-left: 3px; margin-right: 0; }
.glyph { font-size: 15px; color: #555; align-items: flex-end; padding-bottom: 1px; }
.a-grow svg, .a-shrink svg { position: absolute; left: 14px; top: 2px; }
.a-shrink { font-size: 13px; padding-right: 2px; }
.b { font-weight: 700; font-size: 13px; color: #555; }
.it { font-style: italic; font-size: 13px; color: #555; }
.u { text-decoration: underline; font-size: 13px; font-weight: 600; color: #555; }
.stack { flex-direction: column; }
.swatch { display: block; width: 16px; height: 4px; flex: none; }
.yellow { background: #ffff00; }
.red { background: #ff0000; }
.a-color { font-size: 13px; line-height: 13px; font-weight: 600; color: #555; }
.sel { background: #c6c6c6; }
.ml4 { margin-left: 4px; }
.ml8 { margin-left: 8px; }
.up6 { margin-top: -7px; }
.dn5 { margin-top: 11px; }
.split { align-items: flex-start; }
.align-left { width: 118px; flex: none; }
.align-left .row1 .cell.sel { margin-left: 4px; }
.vsep.tall { height: 56px; margin-top: -3px; }
.align-right { margin-left: 8px; display: flex; flex-direction: column; }
.txtrow { display: flex; align-items: center; gap: 4px; height: 23px; }
.txtrow.top { margin-bottom: 8px; }
.tx { white-space: nowrap; }
.merge-dd { margin-left: 8px; }
.pct { font-size: 15px; color: #555; font-weight: 600; }
.cma { font-size: 14px; font-weight: 700; color: #555; padding-bottom: 4px; }
.decs { display: flex; flex-direction: column; align-items: flex-end; font-size: 9.500px; line-height: 10px; color: #444; white-space: nowrap; margin-top: -3px; }
.arr { color: #4a7fb5; font-size: 9px; }

.editcol { width: 98px; display: flex; flex-direction: column; flex: none; }
.edit-row { height: 23px; display: flex; align-items: center; gap: 4px; }
.edit-row.sum { height: 22px; }
.sum-dd { margin-left: 8px; }

/* formula bar */
.fbar { height: 51px; flex: none; background: #e6e6e6; display: flex; padding: 10px 5px 11px; }
.namebox { width: 102px; background: #fff; border: 1px solid #c6c6c6; display: flex; align-items: center; justify-content: space-between; padding: 0 6px 0 7px; font-size: 14px; color: #555; }
.big-dd { border-left-width: 4px; border-right-width: 4px; border-top-width: 4px; }
.fdots { width: 2px; height: 11px; margin: 9px 14px 0 14px; background: repeating-linear-gradient(to bottom, #a0a0a0 0 2px, transparent 2px 4px); flex: none; }
.fbtns { width: 110px; background: #f1f1f1; border: 1px solid #c6c6c6; display: flex; align-items: center; justify-content: space-between; padding: 0 12px 0 13px; }
.fx { font: italic 700 13px "Liberation Serif", serif; color: #666; }
.finput { margin-left: 3px; flex: 1; background: #fff; border: 1px solid #c6c6c6; position: relative; }
.chev { position: absolute; right: 3px; top: 10px; width: 6px; height: 6px; border-right: 1px solid #555; border-bottom: 1px solid #555; transform: rotate(45deg); }

/* sheet */
.sheetarea { height: 474px; flex: none; display: flex; background: #e6e6e6; }
.sheet { width: 1345px; flex: none; overflow: hidden; display: flex; flex-direction: column; background: #fff; border-right: 1px solid #9f9f9f; }
.colhead { height: 18px; display: flex; flex: none; background: #e6e6e6; border-bottom: 1px solid #9f9f9f; width: 1500px; }
.corner { width: 29px; flex: none; position: relative; border-right: 1px solid #b0b0b0; }
.corner-tri { position: absolute; right: 3px; bottom: 2px; width: 0; height: 0; border-left: 11px solid transparent; border-bottom: 11px solid #b5b5b5; }
.ch { flex: none; height: 17px; text-align: center; line-height: 20px; font-size: 13px; color: #333; border-right: 1px solid #b0b0b0; font-family: "Liberation Sans", sans-serif; }
.ch.cur { background: #d2d2d2; color: #217346; box-shadow: inset 0 -2px 0 #217346; }
.sheetbody { display: flex; flex: 1; min-height: 0; position: relative; }
.rowhead { width: 29px; flex: none; background: #e6e6e6; border-right: 1px solid #9f9f9f; }
.rh { display: block; height: 18px; line-height: 20px; text-align: center; padding-right: 3px; font-size: 14px; color: #333; border-bottom: 1px solid #c6c6c6; font-family: "Liberation Sans", sans-serif; }
.rh.cur { background: #d2d2d2; color: #217346; box-shadow: inset -2px 0 0 #217346; }
.cols { position: relative; flex: 1; display: flex; }
.col { flex: none; height: 100%; border-right: 1px solid #d4d4d4; background: repeating-linear-gradient(to bottom, transparent 0 17px, #d4d4d4 17px 18px); }
.selcell { position: absolute; left: 483px; top: 70px; width: 74px; height: 20px; border: 2px solid #217346; }
.sbtn { position: absolute; left: 0; font-size: 13px; color: #111; text-align: center; background: #f0f0f0; white-space: nowrap; font-feature-settings: normal; }
.raised { top: 55px; width: 144px; height: 60px; line-height: 19px; padding-top: 8px; border-top: 1px solid #ddd; border-right: 2px solid #6e6e6e; border-bottom: 2px solid #6e6e6e; }
.pressed { top: 125px; left: 0; width: 142px; height: 54px; line-height: 20px; padding-top: 6px; border-top: 2px solid #777; border-left: 1px solid #999; }

.vscroll { width: 21px; display: flex; flex-direction: column; padding: 3px 2px 0 3px; }
.sbtn-up, .sbtn-dn { height: 15px; background: #fff; border: 1px solid #b5b5b5; display: flex; align-items: center; justify-content: center; flex: none; }
.sbtn-dn { margin-top: 16px; height: 14px; }
.vthumb { height: 426px; background: #fff; border: 1px solid #b5b5b5; border-top: none; flex: none; }
.tri-up, .tri-dn { width: 0; height: 0; border-left: 5px solid transparent; border-right: 5px solid transparent; }
.tri-up { border-bottom: 5px solid #666; }
.tri-dn { border-top: 5px solid #666; }

/* sheet tabs */
.tabbar { height: 28px; flex: none; background: #e6e6e6; border-top: 1px solid #9f9f9f; border-bottom: 1px solid #d2d2d2; display: flex; align-items: flex-start; }
.tabnav { width: 102px; height: 20px; margin-top: 3px; display: flex; align-items: center; padding-left: 26px; gap: 23px; border-right: 1px solid #9a9a9a; flex: none; }
.nav-l { width: 0; height: 0; border-top: 4px solid transparent; border-bottom: 4px solid transparent; border-right: 4px solid #c0c0c0; }
.nav-r { width: 0; height: 0; border-top: 4px solid transparent; border-bottom: 4px solid transparent; border-left: 4px solid #c0c0c0; }
.nav-l.dark { border-right-color: #666; }
.nav-r.dark { border-left-color: #666; }
.stab { height: 20px; margin-top: 3px; line-height: 20px; text-align: center; font-size: 14px; color: #444; flex: none; white-space: nowrap; }
.stab.s96 { width: 96px; padding-right: 4px; }
.stab.s74 { width: 75px; padding-right: 2px; }
.stab.s71 { width: 71px; border-right: 1px solid #9a9a9a; }
.stab.on { height: 26px; margin-top: -1px; padding-top: 4px; line-height: 19px; background: #fff; color: #217346; border-left: 1px solid #9a9a9a; border-right: 1px solid #9a9a9a; border-bottom: 3px solid #217346; }
.addsheet { margin: 5px 0 0 32px; }
.hdots { width: 2px; height: 11px; margin: 8px 0 0 426px; background: repeating-linear-gradient(to bottom, #a0a0a0 0 2px, transparent 2px 4px); flex: none; }
.hscroll { width: 509px; height: 15px; margin: 6px 0 0 15px; display: flex; background: #dcdcdc; border: 1px solid #b5b5b5; flex: none; }
.hbtn { width: 15px; flex: none; background: #fff; display: flex; align-items: center; justify-content: center; }
.hthumb { flex: 1; background: #fff; border-left: 1px solid #b5b5b5; border-right: 1px solid #b5b5b5; }
.htrack { width: 30px; flex: none; border-right: 1px solid #b5b5b5; }

/* status */
.statusbar { height: 22px; flex: none; background: #f1f1f1; display: flex; align-items: center; }
.ready { margin-left: 7px; color: #555; }
.macro { margin-left: 20px; }
.views { margin-left: auto; display: flex; height: 22px; }
.view { width: 38px; display: flex; align-items: center; justify-content: center; }
.view.on { background: #c6c6c6; }
.zoom { display: flex; align-items: center; margin-left: 5px; width: 179px; height: 22px; }
.zm-minus { width: 6px; height: 2px; background: #666; flex: none; }
.zm-track { position: relative; width: 100px; height: 1px; background: #999; margin-left: 4px; flex: none; }
.zm-knob { position: absolute; left: 49px; top: -5px; width: 3px; height: 11px; background: #666; }
.zm-plus { position: relative; width: 8px; height: 2px; background: #666; margin-left: 4px; flex: none; }
.zm-plus::after { content: ""; position: absolute; left: 3px; top: -3px; width: 2px; height: 8px; background: #666; }
.zm-pct { margin-left: 15px; font-size: 13px; color: #555; white-space: nowrap; }

/* taskbar */
.taskbar { height: 40px; flex: none; display: flex; background: linear-gradient(to right, #000 0, #000 45%, #050c16 70%, #040812 100%); color: #fff; }
.start { width: 48px; flex: none; display: flex; align-items: center; justify-content: center; }
.search { width: 344px; flex: none; background: #333; color: #8c8c8c; font-size: 14px; display: flex; align-items: center; padding-left: 9px; }
.tb { width: 49px; flex: none; display: flex; align-items: center; justify-content: center; position: relative; }
.tb.run::after { content: ""; position: absolute; left: 2px; right: 2px; bottom: 0; height: 2px; background: #ea7f9f; }
.tb.cur { background: #2e3338; }
.tb.cur::after { left: 0; right: 0; }
.dw { width: 21px; height: 19px; border: 2px solid #57e000; background: #102a00; color: #5fe800; font: 12px/15px "Liberation Sans", sans-serif; text-align: center; }
.xlicon { display: flex; align-items: center; width: 24px; height: 20px; }
.xl { width: 13px; height: 20px; background: #1e7145; color: #fff; font: 700 12px/20px "Liberation Sans", sans-serif; text-align: center; }
.tray { margin-left: auto; display: flex; align-items: center; height: 40px; }
.ti { display: flex; align-items: center; justify-content: center; flex: none; height: 40px; }
.ime { font-size: 18px; font-weight: 300; color: #fff; }
.clock { width: 80px; display: flex; flex-direction: column; align-items: center; font-size: 12px; line-height: 17px; color: #fff; }
.showdesk { width: 4px; height: 40px; border-left: 1px solid #444; }

/* dialog */
.dialog { position: absolute; left: 525px; top: 239px; width: 316px; height: 243px; background: #f0f0f0; border: 1px solid #222; box-shadow: 0 0 14px rgba(0,0,0,.35); color: #111; font-size: 12px; display: flex; flex-direction: column; }
.dlg-title { height: 30px; flex: none; background: #fff; display: flex; align-items: center; justify-content: space-between; padding: 0 10px 0 8px; font-size: 11.500px; letter-spacing: -1.700px; }
.dlg-body { display: flex; flex: 1; }
.dlg-left { width: 176px; padding: 47px 0 0 48px; flex: none; }
.dlg-lbl { height: 16px; line-height: 16px; white-space: nowrap; }
.dlg-lbl.first { letter-spacing: -.7px; }
.dlg-lbl.second { margin-top: 8px; }
.dlg-input { width: 95px; height: 31px; background: #fff; border-top: 2px solid #808080; border-left: 2px solid #808080; border-right: 1px solid #e3e3e3; border-bottom: 1px solid #e3e3e3; margin-top: 1px; }
.dlg-right { padding: 80px 0 0 0; }
.dlg-btn { width: 96px; height: 32px; line-height: 30px; text-align: center; background: #f0f0f0; border-top: 1px solid #fff; border-left: 1px solid #fff; border-right: 2px solid #808080; border-bottom: 2px solid #808080; font-size: 12px; }
.dlg-btn.back { margin: 32px 0 0 32px; }
```
